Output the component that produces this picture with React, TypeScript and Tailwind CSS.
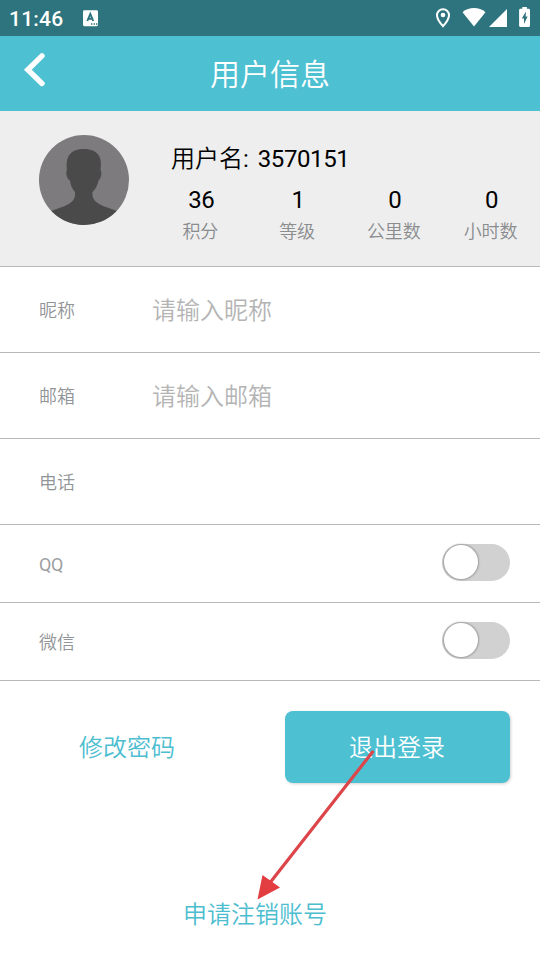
import React from "react";

const stats = [
  { value: "36", label: "积分" },
  { value: "1", label: "等级" },
  { value: "0", label: "公里数" },
  { value: "0", label: "小时数" },
];

const fields = [
  { label: "昵称", placeholder: "请输入昵称" },
  { label: "邮箱", placeholder: "请输入邮箱" },
  { label: "电话", placeholder: "" },
];

function StatusBar() {
  return (
    <div className="flex h-9 items-center bg-[#2d747e] pl-[9px] text-white">
      <span className="pt-px text-[21px] leading-9 font-medium tracking-[0.2px]">11:46</span>
      <svg className="ml-[20px]" width="16" height="18" viewBox="0 0 16 18">
        <rect x="0" y="1.2" width="15" height="16" rx="1.4" fill="#fff" />
        <path d="M4.300 12 L7.300 5 L10.300 12 M5.400 9.800 H9.200" fill="none" stroke="#2d747e" strokeWidth="1.900" />
        <path d="M8 15h1.400M10.600 15h1.400M13 15h1.400" stroke="#2d747e" strokeWidth="1.300" />
      </svg>
      <svg className="ml-auto" width="120" height="36" viewBox="0 0 120 36">
        <path d="M23 9.200c-3.400 0-6 2.600-6 6 0 4.300 6 11 6 11s6-6.700 6-11c0-3.400-2.600-6-6-6z" fill="none" stroke="#fff" strokeWidth="2" />
        <circle cx="23" cy="15" r="2.300" fill="#fff" />
        <path d="M42.500 12.300c6.500-5.600 16.500-5.600 23 0L54 26.600z" fill="#fff" />
        <path d="M87 9v18H69z" fill="#fff" />
        <path d="M102.300 7h4.600v1.800h1.700c.8 0 1.400.6 1.400 1.400v15.300c0 .8-.6 1.500-1.400 1.500h-8.100c-.8 0-1.400-.7-1.400-1.500V10.200c0-.8.6-1.400 1.400-1.400h1.800z" fill="#fff" />
        <path d="M106 11.500l-4.200 7h2.200v5.500l3.600-7.500h-2z" fill="#2d747e" />
      </svg>
    </div>
  );
}

function Toggle() {
  return (
    <span className="mr-[30px] mb-[3px] flex h-[37px] w-[68px] items-center rounded-full bg-[#d1d1d1] pl-[2px]">
      <span className="h-[34px] w-[34px] rounded-full bg-white shadow-[0_0_2px_1px_rgba(0,0,0,0.25)]" />
    </span>
  );
}

export default function App() {
  return (
    <div className="relative flex h-[960px] w-[540px] flex-col overflow-hidden bg-white font-['Roboto','Noto_Sans_CJK_SC',sans-serif]">
      <StatusBar />
      <header className="flex h-[75px] items-center bg-[#4dc0d2] text-white">
        <svg className="mb-[7px] ml-[20px]" width="40" height="40" viewBox="0 0 40 40">
          <path d="M22 5.800L7.800 19.800L22 33.500" fill="none" stroke="#fff" strokeWidth="5.400" strokeLinecap="round" />
        </svg>
        <h1 className="w-[420px] pt-px text-center text-[30px] leading-[75px] font-[350]">用户信息</h1>
      </header>

      <section className="flex h-[156px] border-b border-[#b8b8b8] bg-[#eee] pt-6 pl-[39px]">
        <svg width="90" height="90" viewBox="0 0 90 90">
          <defs>
            <clipPath id="avatar"><circle cx="45" cy="45" r="45" /></clipPath>
          </defs>
          <g clipPath="url(#avatar)">
            <rect width="90" height="90" fill="#7d7b7e" />
            <path d="M28 35C26 20 33 14 44.500 14C57 14 64 20 61.500 35C63.500 37 62 44 59.500 45.500C58.500 50 57 54 53.500 57C52.500 65 58 68 64 71L78 76V90H12V76L26 71C32 68 37 65 36 57C33 54 31.500 50 31 45.500C27.500 44 26.500 37 28 35Z" fill="#4a4a4a" />
          </g>
        </svg>
        <div className="ml-[23px] flex-1">
          <p className="mt-[6px] pl-[19px] text-2xl leading-9 font-normal text-black"><span className="font-[350]">用户名</span>: <span className="ml-[3px] tracking-[-0.4px]">3570151</span></p>
          <div className="mr-px grid grid-cols-4">
            {stats.map((s) => (
              <div key={s.label} className="flex flex-col items-center">
                <span className="mt-[7px] pl-[2px] text-2xl leading-8 tracking-[-0.3px] text-black">{s.value}</span>
                <span className="mt-px text-lg leading-[30px] font-[350] text-[#8a8c8e]">{s.label}</span>
              </div>
            ))}
          </div>
        </div>
      </section>

      {fields.map((f) => (
        <div key={f.label} className="flex h-[86px] items-center border-b border-[#b8b8b8] pt-[2px] pl-[39px]">
          <span className="w-[113px] text-lg font-[350] text-[#929598]">{f.label}</span>
          <span className="text-2xl font-[350] text-[#b4b4b4]">{f.placeholder}</span>
        </div>
      ))}
      {["QQ", "微信"].map((name) => (
        <div key={name} className="flex h-[78px] items-center justify-between border-b border-[#b8b8b8] pl-[39px]">
          <span className={name === "QQ" ? "pt-[2px] text-lg font-normal tracking-[-0.3px] text-[#9da0a2]" : "pt-[2px] text-lg font-[350] text-[#929598]"}>{name}</span>
          <Toggle />
        </div>
      ))}

      <div className="mt-[30px] flex h-[72px] items-center pl-[79px] text-2xl">
        <button className="w-[206px] pt-[2px] text-left font-[350] text-[#4dbdd0]">修改密码</button>
        <button className="h-[72px] w-[225px] rounded-lg bg-[#4dc0d2] pt-[2px] pr-px text-center font-[350] text-white shadow-[1px_1px_3px_rgba(0,0,0,0.18)]">退出登录</button>
      </div>
      <button className="mt-[114px] ml-[183px] self-start text-2xl leading-9 font-[350] text-[#4dbdd0]">申请注销账号</button>

      <svg className="pointer-events-none absolute top-[740px] left-[240px]" width="150" height="170" viewBox="0 0 150 170">
        <path d="M132.500 12L29 144" stroke="#dc4549" strokeWidth="3.200" strokeLinecap="round" />
        <path d="M17.500 159.500L22.500 135L40 147.500Z" fill="#e23d40" />
      </svg>
    </div>
  );
}
